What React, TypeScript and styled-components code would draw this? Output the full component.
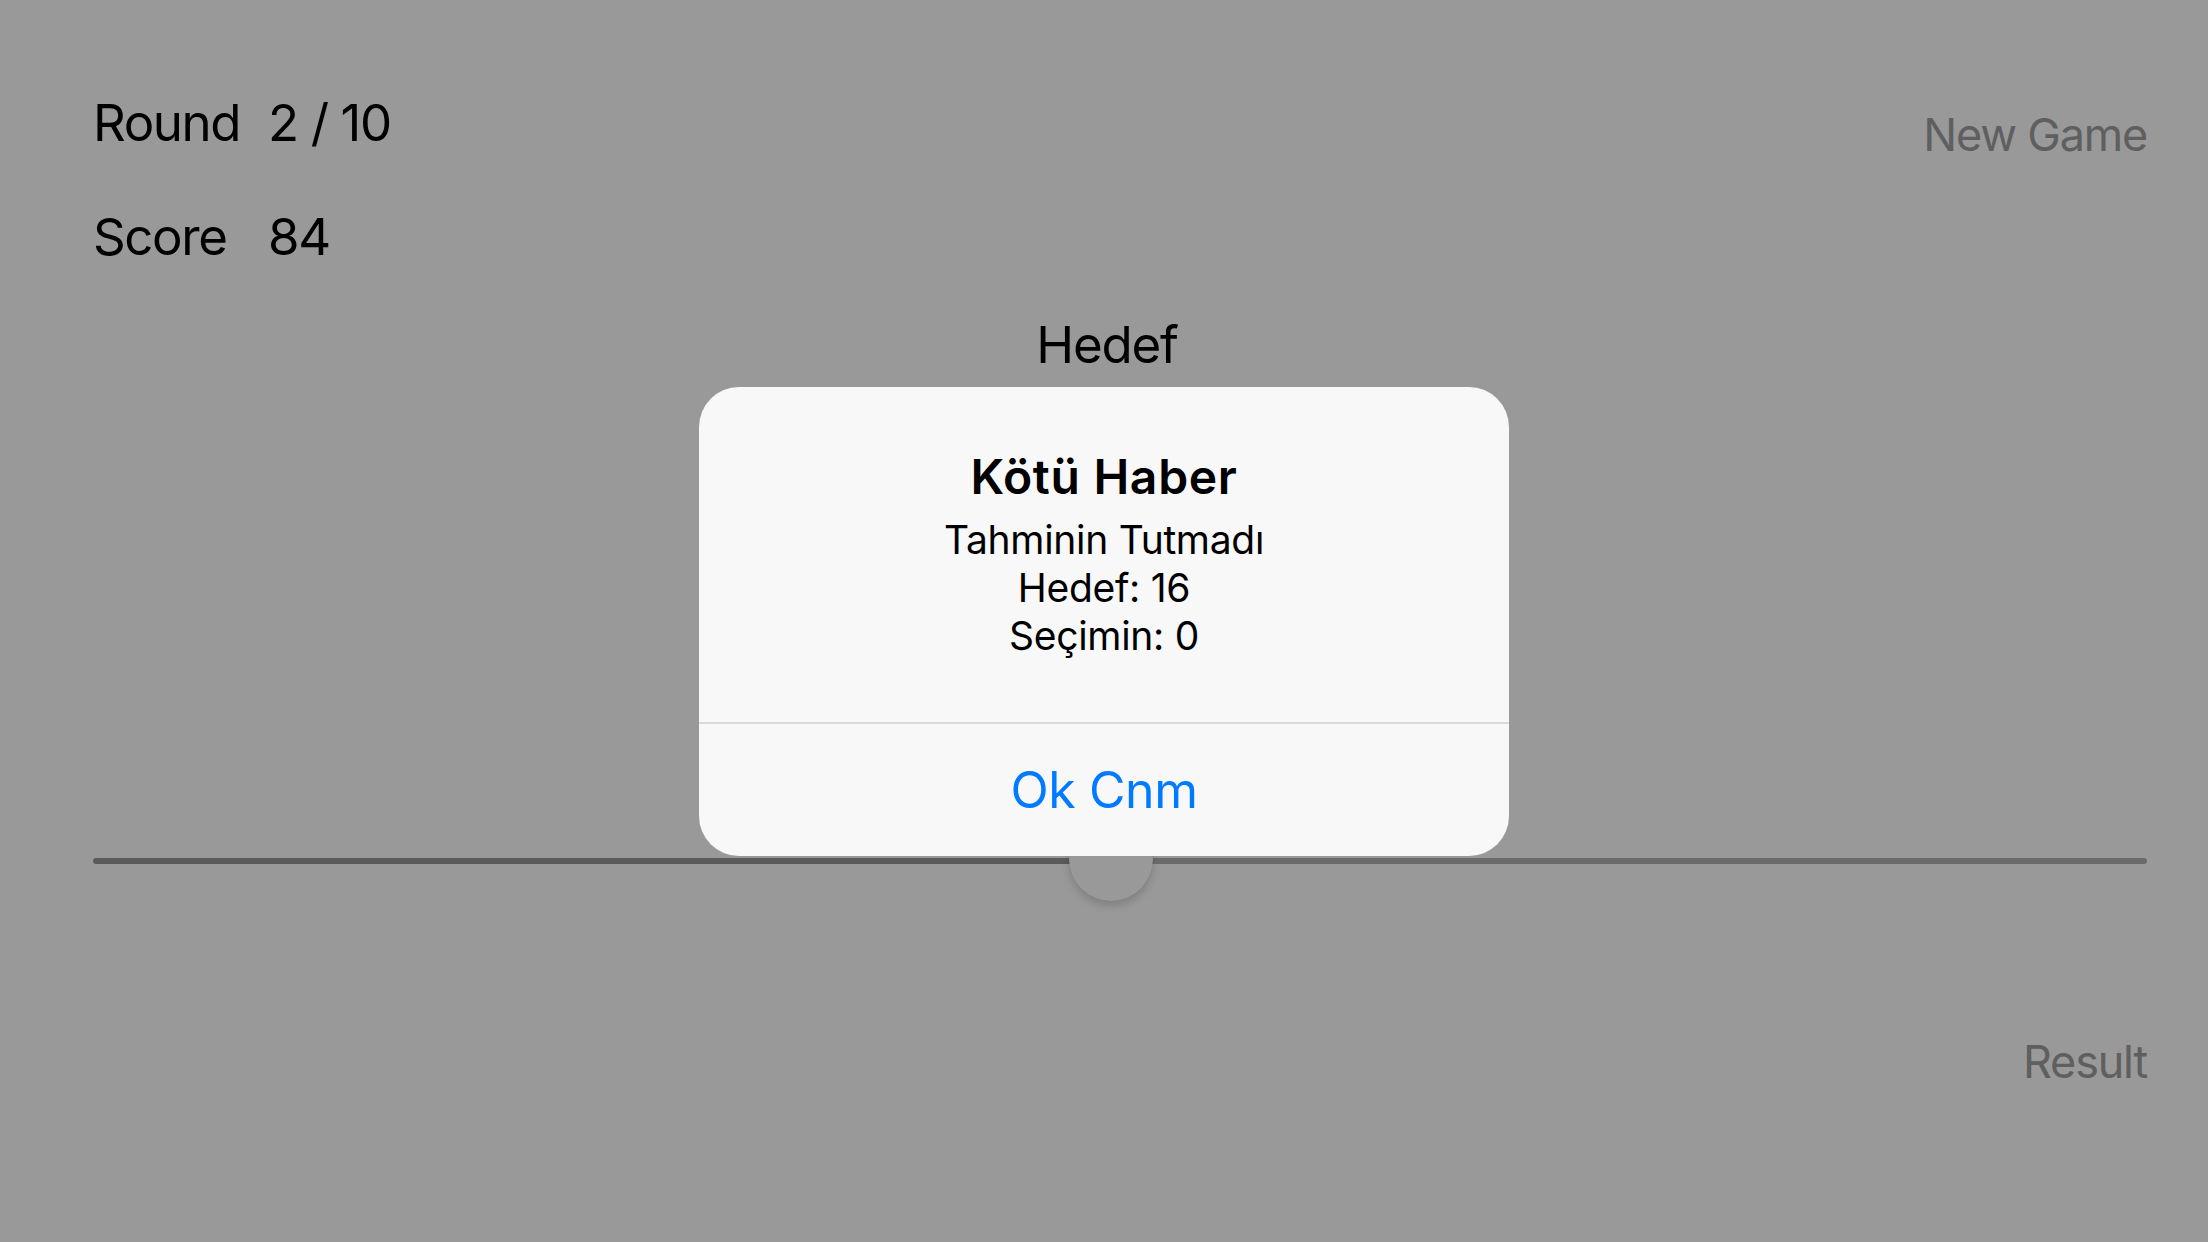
import React from "react";
import styled, { createGlobalStyle } from "styled-components";

const GlobalStyle = createGlobalStyle`
  html, body {
    margin: 0;
    padding: 0;
    background: #ffffff;
  }
  body {
    font-family: Inter, "Noto Sans", "Liberation Sans", sans-serif;
    -webkit-font-smoothing: antialiased;
  }
`;

const Screen = styled.div`
  position: relative;
  width: 2208px;
  height: 1242px;
  box-sizing: border-box;
  padding: 90px 61px 0 93px;
  background: #ffffff;
  display: flex;
  flex-direction: column;
  overflow: hidden;
`;

const TopBar = styled.div`
  display: flex;
  justify-content: space-between;
  align-items: flex-start;
`;

const Stats = styled.div`
  margin-top: 2px;
  display: grid;
  grid-template-columns: 175px auto;
  row-gap: 52px;
`;

const StatText = styled.div`
  font-size: 51px;
  line-height: 62px;
  color: #000;
  letter-spacing: -1.4px;
`;

const TextButton = styled.button<{ $top?: number }>`
  border: none;
  background: transparent;
  padding: 0;
  margin-top: ${(p) => p.$top ?? 0}px;
  font-family: inherit;
  font-size: 45px;
  line-height: 54px;
  color: #9e9e9e;
  letter-spacing: -1.2px;
  cursor: pointer;
`;

const TargetLabel = styled.div`
  margin-top: 46px;
  margin-right: 26px;
  align-self: center;
  font-size: 51px;
  line-height: 62px;
  color: #000;
  letter-spacing: -1.2px;
`;

const SliderWrap = styled.div`
  margin-top: 482px;
  position: relative;
  height: 6px;
  display: flex;
`;

const Track = styled.div<{ $color: string }>`
  height: 6px;
  background: ${(p) => p.$color};
  border-radius: 3px;
`;

const Thumb = styled.div`
  position: absolute;
  top: 50%;
  width: 84px;
  height: 84px;
  margin-left: -42px;
  margin-top: -44px;
  border-radius: 50%;
  background: #ffffff;
  box-shadow: 0 5px 8px rgba(0, 0, 0, 0.16), 0 0 1px rgba(0, 0, 0, 0.12);
`;

const BottomBar = styled.div`
  margin-top: 171px;
  display: flex;
  justify-content: flex-end;
`;

const Overlay = styled.div`
  position: absolute;
  inset: 0;
  background: rgba(0, 0, 0, 0.4);
  display: flex;
  align-items: center;
  justify-content: center;
`;

const Alert = styled.div`
  width: 810px;
  height: 469px;
  background: #f8f8f8;
  border-radius: 40px;
  display: flex;
  flex-direction: column;
  overflow: hidden;
`;

const AlertBody = styled.div`
  flex: 1;
  padding: 61px 40px 0;
  display: flex;
  flex-direction: column;
  align-items: center;
  text-align: center;
`;

const AlertTitle = styled.div`
  font-size: 48px;
  line-height: 58px;
  font-weight: 600;
  color: #000;
  letter-spacing: 0.7px;
`;

const AlertMessage = styled.div`
  margin-top: 10px;
  font-size: 39px;
  line-height: 48px;
  color: #000;
  letter-spacing: -0.3px;
`;

const Separator = styled.div`
  height: 2px;
  background: #dbdbdb;
`;

const AlertAction = styled.button`
  height: 132px;
  border: none;
  background: transparent;
  font-family: inherit;
  font-size: 50px;
  color: #007aff;
  letter-spacing: -0.4px;
  padding: 0;
  cursor: pointer;
`;

export default function App() {
  const value = 0.4954;
  const pos = `calc(42px + (100% - 84px) * ${value})`;
  return (
    <>
      <GlobalStyle />
      <Screen>
        <TopBar>
          <Stats>
            <StatText>Round</StatText>
            <StatText>2 / 10</StatText>
            <StatText>Score</StatText>
            <StatText>84</StatText>
          </Stats>
          <TextButton $top={18}>New Game</TextButton>
        </TopBar>
        <TargetLabel>Hedef</TargetLabel>
        <SliderWrap>
          <Track $color="#989898" style={{ width: pos }} />
          <Track $color="#b3b3b3" style={{ flex: 1 }} />
          <Thumb style={{ left: pos }} />
        </SliderWrap>
        <BottomBar>
          <TextButton>Result</TextButton>
        </BottomBar>
        <Overlay>
          <Alert>
            <AlertBody>
              <AlertTitle>Kötü Haber</AlertTitle>
              <AlertMessage>
                Tahminin Tutmadı
                <br />
                Hedef: 16
                <br />
                Seçimin: 0
              </AlertMessage>
            </AlertBody>
            <Separator />
            <AlertAction>Ok Cnm</AlertAction>
          </Alert>
        </Overlay>
      </Screen>
    </>
  );
}
